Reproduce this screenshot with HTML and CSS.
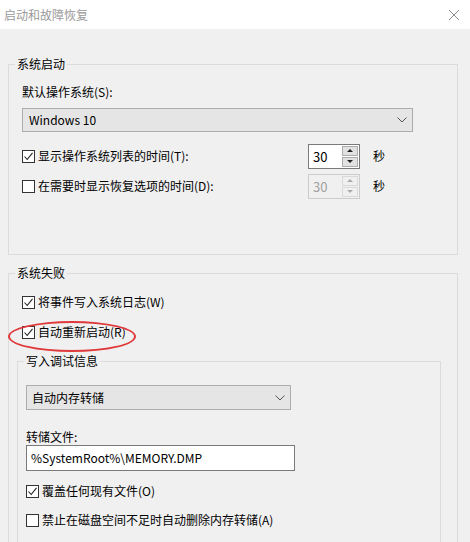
FILE: index.html
```html
<!DOCTYPE html>
<html lang="zh-CN">
  <head>
    <meta charset="UTF-8" />
    <title>启动和故障恢复</title>
    <link rel="stylesheet" href="styles.css">
  </head>
  <body>
    <div class="titlebar">
      <span class="title">启动和故障恢复</span>
      <svg class="close" width="12" height="12" viewBox="0 0 12 12">
        <path d="M1 1L11 11M11 1L1 11" stroke="#8c8c8c" stroke-width="1" fill="none" />
      </svg>
    </div>

    <div class="content">
      <!-- 系统启动 -->
      <fieldset class="group group-startup">
        <legend>系统启动</legend>
        <div class="field-label">默认操作系统(S):</div>
        <div class="select select-os">
          <span>Windows 10</span>
          <svg class="chevron" width="10" height="6" viewBox="0 0 10 6">
            <path d="M0.5 0.5L5 5L9.5 0.5" stroke="#555" fill="none" />
          </svg>
        </div>

        <div class="row row-spin first">
          <div class="check-label">
            <span class="checkbox checked">
              <svg width="11" height="11" viewBox="0 0 11 11"><path d="M1.5 5.5L4.2 8.5L9.5 1.8" stroke="#222" stroke-width="1.1" fill="none" /></svg>
            </span>
            <span>显示操作系统列表的时间(T):</span>
          </div>
          <div class="spin">
            <span class="spin-value">30</span>
            <span class="spin-btns">
              <span class="spin-btn"><i class="tri up"></i></span>
              <span class="spin-btn"><i class="tri down"></i></span>
            </span>
          </div>
          <span class="unit">秒</span>
        </div>

        <div class="row row-spin">
          <div class="check-label">
            <span class="checkbox"></span>
            <span>在需要时显示恢复选项的时间(D):</span>
          </div>
          <div class="spin disabled">
            <span class="spin-value">30</span>
            <span class="spin-btns">
              <span class="spin-btn"><i class="tri up"></i></span>
              <span class="spin-btn"><i class="tri down"></i></span>
            </span>
          </div>
          <span class="unit">秒</span>
        </div>
      </fieldset>

      <!-- 系统失败 -->
      <fieldset class="group group-failure">
        <legend>系统失败</legend>
        <div class="row check-row first">
          <span class="checkbox checked">
            <svg width="11" height="11" viewBox="0 0 11 11"><path d="M1.5 5.5L4.2 8.5L9.5 1.8" stroke="#222" stroke-width="1.1" fill="none" /></svg>
          </span>
          <span>将事件写入系统日志(W)</span>
        </div>
        <div class="row check-row second">
          <span class="checkbox checked">
            <svg width="11" height="11" viewBox="0 0 11 11"><path d="M1.5 5.5L4.2 8.5L9.5 1.8" stroke="#222" stroke-width="1.1" fill="none" /></svg>
          </span>
          <span>自动重新启动(R)</span>
        </div>
        <div class="highlight"></div>

        <fieldset class="group inner">
          <legend>写入调试信息</legend>
          <div class="select select-dump">
            <span>自动内存转储</span>
            <svg class="chevron" width="10" height="6" viewBox="0 0 10 6">
              <path d="M0.5 0.5L5 5L9.5 0.5" stroke="#555" fill="none" />
            </svg>
          </div>
          <div class="field-label dump-label">转储文件:</div>
          <div class="textbox">%SystemRoot%\MEMORY.DMP</div>
          <div class="row check-row overwrite">
            <span class="checkbox checked">
              <svg width="11" height="11" viewBox="0 0 11 11"><path d="M1.5 5.5L4.2 8.5L9.5 1.8" stroke="#222" stroke-width="1.1" fill="none" /></svg>
            </span>
            <span>覆盖任何现有文件(O)</span>
          </div>
          <div class="row check-row disable-auto">
            <span class="checkbox"></span>
            <span>禁止在磁盘空间不足时自动删除内存转储(A)</span>
          </div>
        </fieldset>
      </fieldset>
    </div>
  </body>
</html>
```

FILE: styles.css
```css
/* dialog base */
body {
  margin: 0;
  background-color: #f0f0f0;
  font-family: "Noto Sans CJK SC", "Microsoft YaHei", sans-serif;
  font-size: 12px;
  line-height: 16px;
  color: #000;
  height: 542px;
  overflow: hidden;
}

.titlebar {
  height: 29px;
  background-color: #fff;
  display: flex;
  align-items: center;
  justify-content: space-between;
  padding: 0 10px 0 4px;
}

.title {
  color: #9a9a9a;
}

.content {
  padding: 27px 0 0 8px;
}

/* group boxes */
.group {
  box-sizing: border-box;
  width: 450px;
  margin: 0;
  padding: 0 0 0 13px;
  border: 1px solid #dcdcdc;
  min-width: 0;
}

.group legend {
  padding: 0 2px;
  margin-left: -7px;
  line-height: 16px;
}

.group-startup {
  padding-bottom: 56px;
}

.group-failure {
  position: relative;
  margin-top: 10px;
  height: 300px;
}

.inner {
  width: 424px;
  margin: 13px 0 0 -5px;
  padding-left: 8px;
  height: 200px;
}

.inner legend {
  margin-left: -2px;
}

.field-label {
  margin-top: 12px;
  height: 16px;
}

/* combo boxes */
.select {
  box-sizing: border-box;
  display: flex;
  align-items: center;
  justify-content: space-between;
  background-color: #e5e5e5;
  border: 1px solid #adadad;
  padding: 0 5px 0 6px;
}

.select-os {
  margin-top: 8px;
  width: 391px;
  height: 24px;
}

.select-dump {
  margin-top: 16px;
  width: 265px;
  height: 25px;
  padding-left: 5px;
}

.textbox {
  box-sizing: border-box;
  width: 269px;
  height: 26px;
  background-color: #fff;
  border: 1px solid #7a7a7a;
  padding: 4px 4px 0 4px;
}

.dump-label {
  margin-top: 19px;
}

/* rows */
.row {
  display: flex;
  align-items: center;
}

.row-spin {
  height: 24px;
  margin-top: 6px;
}

.row-spin.first {
  margin-top: 12px;
}

.check-label {
  width: 286px;
  display: flex;
  align-items: center;
}

.check-row {
  height: 16px;
}

.check-row.first {
  margin-top: 13px;
}

.check-row.second {
  margin-top: 14px;
}

.check-row.overwrite {
  margin-top: 12px;
}

.check-row.disable-auto {
  margin-top: 13px;
}

.checkbox {
  box-sizing: border-box;
  width: 13px;
  height: 13px;
  border: 1px solid #333;
  background-color: #fff;
  margin-right: 3px;
  display: flex;
  align-items: center;
  justify-content: center;
  flex-shrink: 0;
}

/* spin boxes */
.spin {
  box-sizing: border-box;
  width: 52px;
  height: 25px;
  display: flex;
  background-color: #fff;
  border: 1px solid #7a7a7a;
}

.spin-value {
  flex: 1;
  padding: 4px 0 0 4px;
  font-size: 13px;
}

.spin-btns {
  width: 16px;
  display: flex;
  flex-direction: column;
  padding: 1px 1px 1px 0;
  gap: 1px;
}

.spin-btn {
  flex: 1;
  background-color: #e1e1e1;
  border: 1px solid #adadad;
  display: flex;
  align-items: center;
  justify-content: center;
}

.tri {
  width: 0;
  height: 0;
  border-left: 3px solid transparent;
  border-right: 3px solid transparent;
}

.tri.up {
  border-bottom: 3px solid #222;
}

.tri.down {
  border-top: 3px solid #222;
}

.spin.disabled {
  background-color: #f0f0f0;
  border-color: #cccccc;
  color: #a0a0a0;
}

.spin.disabled .spin-btn {
  background-color: #f0f0f0;
  border-color: #d9d9d9;
}

.spin.disabled .tri.up {
  border-bottom-color: #a8a8a8;
}

.spin.disabled .tri.down {
  border-top-color: #a8a8a8;
}

.unit {
  margin-left: 13px;
}

/* red annotation around 自动重新启动 */
.highlight {
  position: absolute;
  left: -1px;
  top: 40px;
  width: 128px;
  height: 31px;
  box-sizing: border-box;
  border: 2px solid #e0393b;
  border-radius: 50%;
}
```
